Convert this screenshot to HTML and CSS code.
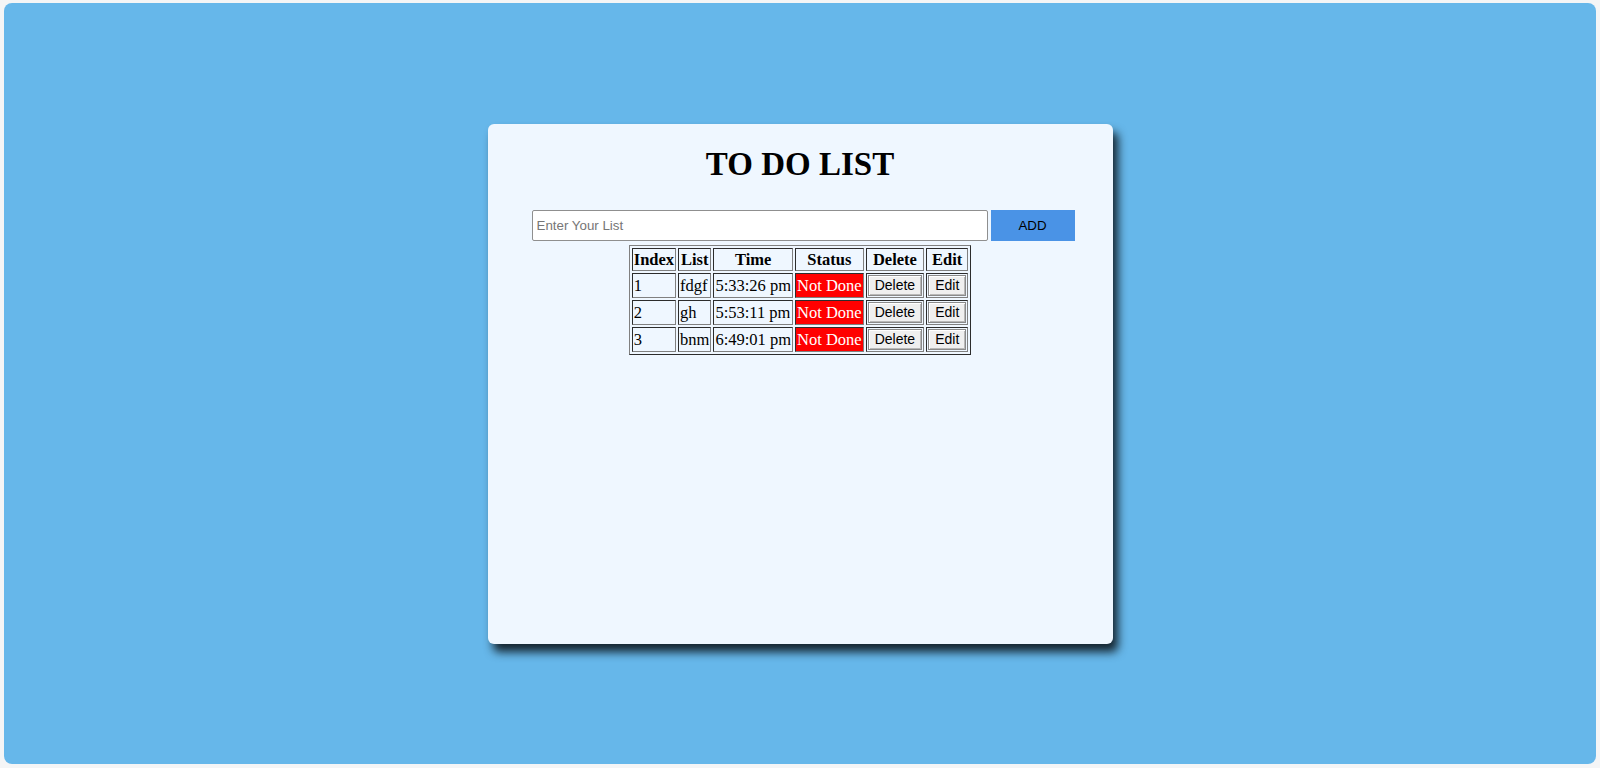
FILE: index.html
```html
<!DOCTYPE html>
<html lang="en">
<head>
<meta charset="utf-8">
<title>To Do List</title>
<link rel="stylesheet" href="styles.css">
</head>
<body>
<div class="page">
  <div class="card">
    <h1 class="title">TO DO LIST</h1>
    <div class="add-row">
      <input class="task-input" type="text" placeholder="Enter Your List">
      <button class="add-btn">ADD</button>
    </div>
    <table class="todo-table">
      <thead>
        <tr><th>Index</th><th>List</th><th>Time</th><th>Status</th><th>Delete</th><th>Edit</th></tr>
      </thead>
      <tbody>
        <tr><td>1</td><td>fdgf</td><td>5:33:26 pm</td><td class="status">Not Done</td><td><button class="row-btn">Delete</button></td><td><button class="row-btn">Edit</button></td></tr>
        <tr><td>2</td><td>gh</td><td>5:53:11 pm</td><td class="status">Not Done</td><td><button class="row-btn">Delete</button></td><td><button class="row-btn">Edit</button></td></tr>
        <tr><td>3</td><td>bnm</td><td>6:49:01 pm</td><td class="status">Not Done</td><td><button class="row-btn">Delete</button></td><td><button class="row-btn">Edit</button></td></tr>
      </tbody>
    </table>
  </div>
</div>
</body>
</html>
```

FILE: styles.css
```css
html, body {
  margin: 0;
  padding: 0;
  height: 100%;
}

body {
  background: #f4f5f6;
  font-family: "Liberation Serif", "Times New Roman", serif;
  padding: 3px 4px 4px 4px;
  box-sizing: border-box;
}

.page {
  height: 761px;
  background: #66b7ea;
  border-radius: 8px;
  display: flex;
  align-items: center;
  justify-content: center;
}

.card {
  width: 625px;
  height: 520px;
  box-sizing: border-box;
  background: #eff7ff;
  border-radius: 6px;
  box-shadow: 5px 8px 10px rgba(0, 0, 0, 0.8);
  display: flow-root;
}

.title {
  margin: 22px 0 0 0;
  font-size: 33px;
  line-height: 36px;
  font-weight: bold;
  text-align: center;
  color: #000;
}

.add-row {
  display: flex;
  gap: 3px;
  margin: 28px 0 0 44px;
}

.task-input {
  width: 456px;
  height: 31px;
  box-sizing: border-box;
  border: 1px solid #8f8f8f;
  border-radius: 2px;
  padding: 0 4px;
  margin: 0;
  font-family: "Liberation Sans", Arial, sans-serif;
  font-size: 13.33px;
  background: #fff;
}

.task-input::placeholder {
  color: #767676;
}

.add-btn {
  width: 84px;
  height: 31px;
  margin: 0;
  border: none;
  background: #4a93e6;
  color: #000;
  font-family: "Liberation Sans", Arial, sans-serif;
  font-size: 13.33px;
}

.todo-table {
  margin: 4px auto 0 auto;
  border: 1px outset #808080;
  border-spacing: 2px;
  font-size: 16.5px;
}

.todo-table th,
.todo-table td {
  border: 1px inset #808080;
  padding: 1px;
  line-height: 19px;
  vertical-align: middle;
}

.todo-table th {
  font-weight: bold;
  text-align: center;
}

.todo-table td {
  text-align: left;
}

.todo-table td.status {
  background: #ff0000;
  color: #fff;
}

.row-btn {
  display: block;
  margin: 0;
  padding: 1px 6px;
  height: 21px;
  box-sizing: border-box;
  font-family: "Liberation Sans", Arial, sans-serif;
  font-size: 14px;
  line-height: 15px;
  color: #000;
  background: #efefef;
  border: 1px solid #8a8a8a;
  box-shadow: inset 1px 1px 0 #ffffff, inset -1px -1px 0 #b8b8b8;
}
```
